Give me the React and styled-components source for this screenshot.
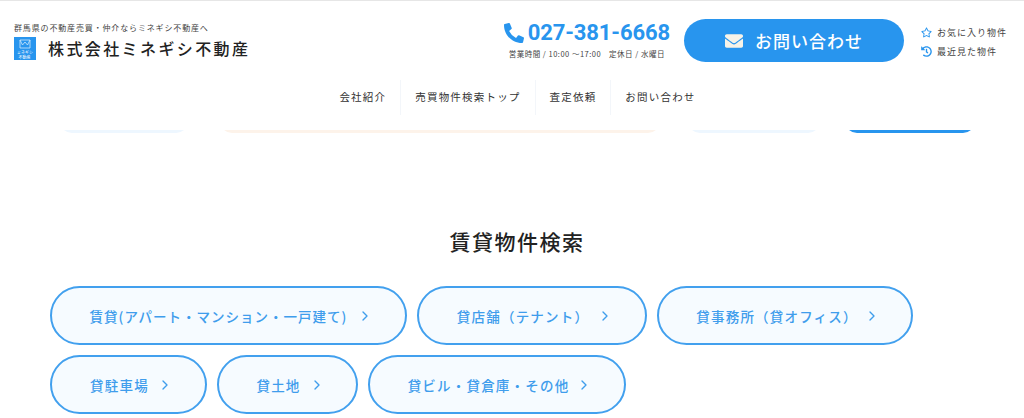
import styled, { createGlobalStyle } from 'styled-components';
import { FaPhoneAlt, FaEnvelope, FaRegStar, FaHistory } from 'react-icons/fa';
import { FiChevronRight } from 'react-icons/fi';

const JP = '"Noto Sans CJK JP", "Noto Sans", sans-serif';
const BLUE = '#2895ee';

const GlobalStyle = createGlobalStyle`
  html, body { margin: 0; background: #fff; }
  body { font-family: ${JP}; color: #222; overflow: hidden; }
  a { color: inherit; text-decoration: none; }
`;

const Page = styled.div`
  width: 1024px;
  height: 418px;
  overflow: hidden;
`;

const Header = styled.header`
  border-top: 1px solid #e6e6e6;
`;

const TopRow = styled.div`
  display: flex;
  justify-content: space-between;
  height: 79px;
  padding: 0 17px 0 14px;
`;

const Brand = styled.div`
  padding-top: 21px;
`;

const Tagline = styled.p`
  margin: 0 0 3px;
  font-size: 8px;
  line-height: 12px;
  letter-spacing: 0.85px;
  color: #444;
  white-space: nowrap;
`;

const BrandRow = styled.div`
  display: flex;
  align-items: center;
  gap: 12px;
`;

const Logo = styled.div`
  width: 22px;
  height: 23px;
  background: ${BLUE};
  color: #fff;
  display: flex;
  flex-direction: column;
  align-items: center;
  overflow: hidden;
  padding-top: 2px;
  box-sizing: border-box;
  svg { display: block; }
`;

const LogoText = styled.span`
  font-size: 5px;
  line-height: 5px;
  white-space: nowrap;
  transform: scale(0.8);
`;

const Company = styled.h1`
  margin: 0;
  font-size: 16px;
  line-height: 23px;
  font-weight: 500;
  letter-spacing: 2.4px;
  color: #222;
  white-space: nowrap;
`;

const Contact = styled.div`
  display: flex;
  align-items: flex-start;
`;

const PhoneBlock = styled.div`
  padding-top: 19px;
  margin-right: 14px;
  text-align: center;
`;

const Phone = styled.div`
  display: flex;
  align-items: center;
  gap: 4px;
  color: ${BLUE};
  font-family: Roboto, sans-serif;
  font-size: 22px;
  line-height: 26px;
  font-weight: 700;
  letter-spacing: -0.1px;
`;

const Hours = styled.div`
  margin-top: 2px;
  font-size: 7.5px;
  line-height: 11px;
  letter-spacing: 0.5px;
  color: #444;
  white-space: pre;
`;

const MailButton = styled.a`
  margin-top: 18px;
  width: 220px;
  height: 43px;
  border-radius: 22px;
  background: ${BLUE};
  color: #fff;
  display: flex;
  align-items: center;
  justify-content: center;
  gap: 12px;
  font-size: 17px;
  font-weight: 500;
  letter-spacing: 1px;
  svg { color: #f7f3e8; }
`;

const SubLinks = styled.ul`
  list-style: none;
  margin: 0 0 0 17px;
  padding: 22px 0 0;
`;

const SubLink = styled.li`
  display: flex;
  align-items: center;
  gap: 5px;
  height: 19px;
  font-size: 9px;
  letter-spacing: 1px;
  color: #444;
  white-space: nowrap;
  svg { color: ${BLUE}; flex: none; }
`;

const Nav = styled.nav`
  display: flex;
  justify-content: center;
  height: 35px;
  margin-left: 11px;
  margin-bottom: 15px;
`;

const NavItem = styled.a`
  display: flex;
  align-items: center;
  padding: 0 14px 2px;
  font-size: 10.5px;
  letter-spacing: 1.2px;
  color: #333;
  white-space: nowrap;
  & + & { border-left: 1px solid #f3f6fa; }
`;

const PeekRow = styled.div`
  display: flex;
  align-items: flex-end;
  height: 3px;
  overflow: hidden;
  padding-left: 60px;
`;

const PeekCard = styled.div`
  flex: none;
  height: 40px;
  width: ${(p) => p.$w}px;
  margin-right: ${(p) => p.$gap}px;
  background: ${(p) => p.$bg};
  border-radius: 0 0 12px 12px;
`;

const Section = styled.section`
  padding: 93px 40px 0 50px;
`;

const Title = styled.h2`
  margin: 0 0 30px;
  height: 30px;
  font-size: 21px;
  line-height: 30px;
  font-weight: 500;
  letter-spacing: 1.5px;
  text-align: center;
  color: #222;
`;

const ButtonGrid = styled.div`
  display: flex;
  flex-wrap: wrap;
  gap: 10px;
`;

const PillButton = styled.a`
  box-sizing: border-box;
  width: ${(p) => p.$w}px;
  height: 59px;
  padding-left: 6px;
  border: 2px solid #42a0ee;
  border-radius: 30px;
  background: #f6fbff;
  color: #3f9dec;
  display: flex;
  align-items: center;
  justify-content: center;
  gap: ${(p) => p.$gap}px;
  font-size: 13.5px;
  font-weight: 500;
  letter-spacing: ${(p) => p.$ls || 1.2}px;
  white-space: nowrap;
  svg { flex: none; }
`;

const buttons = [
  { label: '賃貸(アパート・マンション・一戸建て)', w: 357, gap: 10, ls: 1 },
  { label: '貸店舗（テナント）', w: 230, gap: 8 },
  { label: '貸事務所（貸オフィス）', w: 256, gap: 6 },
  { label: '貸駐車場', w: 157, gap: 8 },
  { label: '貸土地', w: 141, gap: 8 },
  { label: '貸ビル・貸倉庫・その他', w: 258, gap: 7 },
];

const navItems = ['会社紹介', '売買物件検索トップ', '査定依頼', 'お問い合わせ'];

export default function App() {
  return (
    <Page>
      <GlobalStyle />
      <Header>
        <TopRow>
          <Brand>
            <Tagline>群馬県の不動産売買・仲介ならミネギシ不動産へ</Tagline>
            <BrandRow>
              <Logo>
                <svg width="12" height="10" viewBox="0 0 12 10" fill="none" stroke="#cfe8fb" strokeWidth="0.8">
                  <path d="M1 1h10v8H1zM1 1l2.5 5L6 3l2.5 3L11 1" />
                </svg>
                <LogoText>ミネギシ</LogoText>
                <LogoText>不動産</LogoText>
              </Logo>
              <Company>株式会社ミネギシ不動産</Company>
            </BrandRow>
          </Brand>
          <Contact>
            <PhoneBlock>
              <Phone>
                <FaPhoneAlt size={20} />
                027-381-6668
              </Phone>
              <Hours>{'営業時間 / 10:00 ～17:00　定休日 / 水曜日'}</Hours>
            </PhoneBlock>
            <MailButton href="#">
              <FaEnvelope size={18} />
              お問い合わせ
            </MailButton>
            <SubLinks>
              <SubLink><FaRegStar size={11} />お気に入り物件</SubLink>
              <SubLink><FaHistory size={11} />最近見た物件</SubLink>
            </SubLinks>
          </Contact>
        </TopRow>
        <Nav>
          {navItems.map((item) => (
            <NavItem href="#" key={item}>{item}</NavItem>
          ))}
        </Nav>
      </Header>
      <PeekRow>
        <PeekCard $w={128} $gap={32} $bg="#eef7ff" />
        <PeekCard $w={440} $gap={28} $bg="#fdf3ea" />
        <PeekCard $w={132} $gap={25} $bg="#eef7ff" />
        <PeekCard $w={130} $gap={0} $bg={BLUE} />
      </PeekRow>
      <Section>
        <Title>賃貸物件検索</Title>
        <ButtonGrid>
          {buttons.map((b) => (
            <PillButton href="#" key={b.label} $w={b.w} $gap={b.gap} $ls={b.ls}>
              {b.label}
              <FiChevronRight size={16} />
            </PillButton>
          ))}
        </ButtonGrid>
      </Section>
    </Page>
  );
}
